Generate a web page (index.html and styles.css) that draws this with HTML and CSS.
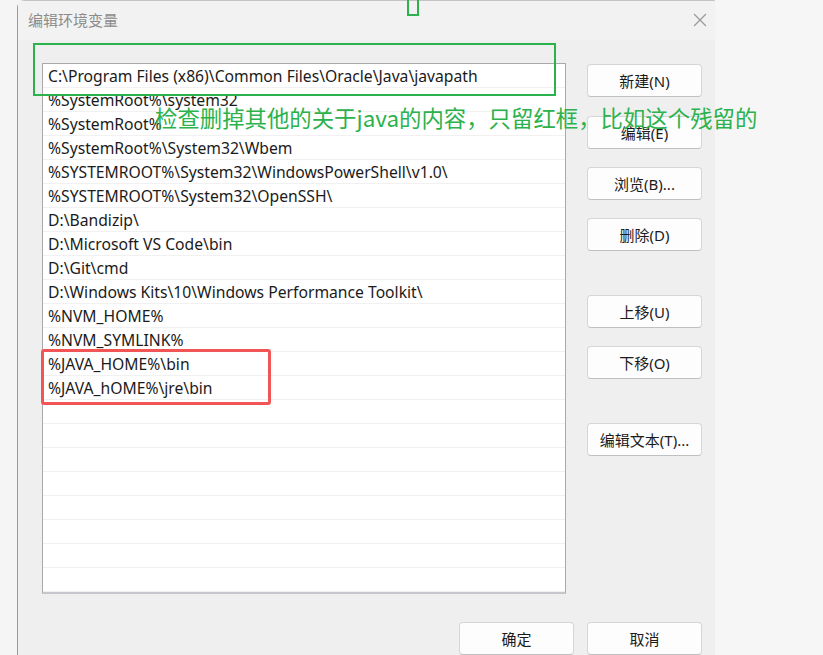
FILE: index.html
```html
<!DOCTYPE html>
<html lang="zh-CN">
<head>
    <meta charset="UTF-8">
    <title>编辑环境变量</title>
    <link rel="stylesheet" href="styles.css">
</head>
<body>
<div class="desktop">
    <div class="gutter"></div>

    <div class="dialog">
        <div class="titlebar">
            <span class="title">编辑环境变量</span>
            <span class="close">
                <svg width="14" height="14" viewBox="0 0 14 14"><path d="M1 1 L13 13 M13 1 L1 13" stroke="#9a9a9a" stroke-width="1.3" fill="none"/></svg>
            </span>
        </div>

        <div class="dialog-body">
            <div class="path-list">
                <div class="row">C:\Program Files (x86)\Common Files\Oracle\Java\javapath</div>
                <div class="row">%SystemRoot%\system32</div>
                <div class="row">%SystemRoot%</div>
                <div class="row">%SystemRoot%\System32\Wbem</div>
                <div class="row">%SYSTEMROOT%\System32\WindowsPowerShell\v1.0\</div>
                <div class="row">%SYSTEMROOT%\System32\OpenSSH\</div>
                <div class="row">D:\Bandizip\</div>
                <div class="row">D:\Microsoft VS Code\bin</div>
                <div class="row">D:\Git\cmd</div>
                <div class="row">D:\Windows Kits\10\Windows Performance Toolkit\</div>
                <div class="row">%NVM_HOME%</div>
                <div class="row">%NVM_SYMLINK%</div>
                <div class="row">%JAVA_HOME%\bin</div>
                <div class="row">%JAVA_hOME%\jre\bin</div>
                <div class="row"></div>
                <div class="row"></div>
                <div class="row"></div>
                <div class="row"></div>
                <div class="row"></div>
                <div class="row"></div>
                <div class="row"></div>
                <div class="row"></div>
            </div>

            <div class="side-buttons">
                <button class="btn">新建(N)</button>
                <button class="btn">编辑(E)</button>
                <button class="btn">浏览(B)...</button>
                <button class="btn">删除(D)</button>
                <button class="btn group-gap">上移(U)</button>
                <button class="btn">下移(O)</button>
                <button class="btn group-gap">编辑文本(T)...</button>
            </div>
        </div>

        <div class="footer">
            <button class="btn">确定</button>
            <button class="btn">取消</button>
        </div>
    </div>

    <div class="backdrop"></div>

    <!-- annotations drawn on top of the screenshot -->
    <div class="mark mark-small"></div>
    <div class="mark mark-green"></div>
    <div class="mark mark-red"></div>
    <div class="note">检查删掉其他的关于java的内容，只留红框，比如这个残留的</div>
</div>
</body>
</html>
```

FILE: styles.css
```css
* {
    box-sizing: border-box;
}

body {
    margin: 0;
    font-family: "Noto Sans", "Noto Sans CJK SC", sans-serif;
    font-size: 15px;
    color: #1b1b1b;
    background-color: #f5f5f5;
}

.desktop {
    position: relative;
    display: flex;
    height: 655px;
    overflow: hidden;
}

.gutter {
    width: 17px;
    flex-shrink: 0;
    background-color: #f5f5f5;
}

.backdrop {
    flex: 1;
    background-color: #f6f6f6;
}

.dialog {
    width: 698px;
    flex-shrink: 0;
    height: 700px;
    background-color: #efefef;
    border-left: 1px solid #9a9a9a;
    border-top: 1px solid #c4c4c4;
    border-top-left-radius: 8px;
}

.titlebar {
    height: 39px;
    display: flex;
    align-items: center;
    justify-content: space-between;
    padding: 0 8px 2px 10px;
    background-color: #f2f2f2;
}

.title {
    color: #8c8c8c;
    font-size: 15px;
}

.close {
    display: flex;
}

.dialog-body {
    display: flex;
    padding: 23px 0 0 24px;
}

.path-list {
    width: 524px;
    height: 531px;
    background-color: #fff;
    border: 1px solid #a9a9a9;
    border-bottom: 2px solid #c6c6cc;
    overflow: hidden;
}

.row {
    height: 24px;
    line-height: 25px;
    padding-left: 5px;
    font-size: 15.7px;
    border-bottom: 1px solid #f1f1f1;
    white-space: nowrap;
}

.side-buttons {
    display: flex;
    flex-direction: column;
    gap: 18px;
    margin-left: 21px;
    padding-top: 1px;
}

.side-buttons .btn:nth-child(2) {
    margin-top: 1px;
}

.group-gap {
    margin-top: 26px;
}

.btn {
    width: 115px;
    height: 33px;
    font-family: "Noto Sans", "Noto Sans CJK SC", sans-serif;
    font-size: 15px;
    color: #1b1b1b;
    background-color: #fdfdfd;
    border: 1px solid #d6d6d6;
    border-bottom-color: #c0c0c0;
    border-radius: 4px;
    padding: 0;
}

.footer {
    display: flex;
    justify-content: flex-end;
    gap: 13px;
    margin-top: 28px;
    padding-right: 13px;
}

.mark {
    position: absolute;
}

.mark-small {
    left: 407px;
    top: -2px;
    width: 12px;
    height: 18px;
    border: 2px solid #2bb24c;
}

.mark-green {
    left: 33px;
    top: 43px;
    width: 523px;
    height: 53px;
    border: 2px solid #2bb24c;
}

.mark-red {
    left: 41px;
    top: 349px;
    width: 230px;
    height: 56px;
    border: 3px solid #f25556;
    border-radius: 3px;
}

.note {
    position: absolute;
    left: 155px;
    top: 102px;
    font-family: "Noto Sans CJK SC", sans-serif;
    font-size: 22.4px;
    line-height: 30px;
    color: #2bb24c;
    white-space: nowrap;
}
```
